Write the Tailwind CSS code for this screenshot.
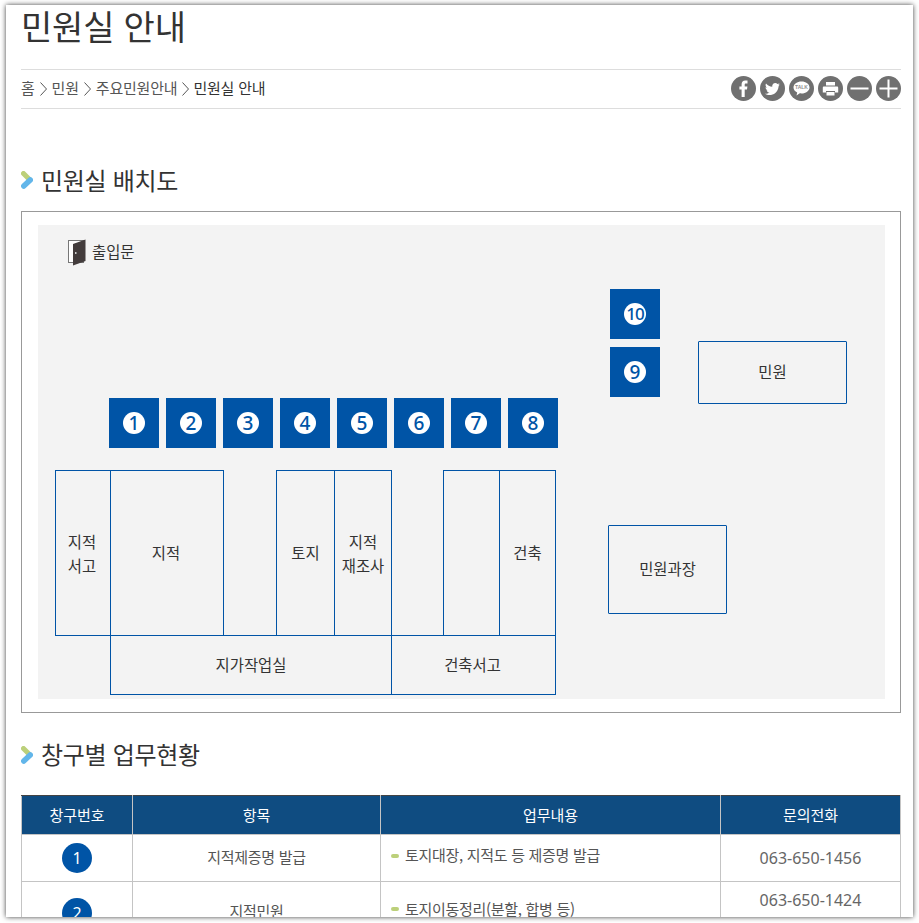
<!DOCTYPE html>
<html lang="ko">
<head>
  <meta charset="UTF-8">
  <meta name="viewport" content="width=device-width, initial-scale=1.0">
  <title>민원실 안내</title>
  <script src="https://cdn.jsdelivr.net/npm/@tailwindcss/browser@4"></script>
</head>
<body class="bg-white h-[923px] overflow-hidden font-['Noto_Sans_CJK_KR','Noto_Sans',sans-serif] text-[#333]">

  <div class="ml-[6px] mt-[5px] w-[907px] h-[912px] overflow-hidden bg-white pl-[15px] pr-[12px] shadow-[0_0_5px_rgba(0,0,0,0.75)]">

    <h1 class="h-[64px] -mt-[1px] mb-[1px] text-[34px] leading-[44px] font-normal tracking-[-0.2px]">민원실 안내</h1>

    <!-- breadcrumb -->
    <div class="h-[40px] flex items-center justify-between border-y border-[#ddd]">
      <div class="flex items-center gap-[5px] -mt-[1px] text-[15px] tracking-[-0.2px] text-[#555]">
        <span>홈</span>
        <svg width="7" height="14" viewBox="0 0 7 14" fill="none" stroke="#555"><path d="M0.5 0.5 L6.5 7 L0.5 13.5"/></svg>
        <span>민원</span>
        <svg width="7" height="14" viewBox="0 0 7 14" fill="none" stroke="#555"><path d="M0.5 0.5 L6.5 7 L0.5 13.5"/></svg>
        <span>주요민원안내</span>
        <svg width="7" height="14" viewBox="0 0 7 14" fill="none" stroke="#555"><path d="M0.5 0.5 L6.5 7 L0.5 13.5"/></svg>
        <span class="-ml-[1px] text-[#333]">민원실 안내</span>
      </div>
      <div class="flex gap-[4px] -mt-[2px]">
        <svg class="w-[25px] h-[25px]" viewBox="0 0 25 25"><circle cx="12.5" cy="12.5" r="12.5" fill="#707070"/><path d="M10.6 21v-7.6H8.4v-3h2.2V8.3c0-2.5 1.4-3.8 3.6-3.8h2.3v3h-1.5c-1 0-1.3.5-1.3 1.3v1.6h2.7l-.4 3h-2.3V21z" fill="#fff"/></svg>
        <svg class="w-[25px] h-[25px]" viewBox="0 0 25 25"><circle cx="12.5" cy="12.5" r="12.5" fill="#707070"/><path d="M20 8.4c-.6.3-1.2.4-1.8.5.6-.4 1.1-1 1.3-1.7-.6.4-1.3.6-2 .8-1.2-1.3-3.1-1.3-4.3-.2-.8.8-1.1 1.9-.9 2.9-2.5-.1-4.8-1.3-6.3-3.2-.8 1.4-.4 3.2.9 4.1-.5 0-1-.1-1.4-.4 0 1.5 1 2.8 2.5 3.1-.5.1-.9.1-1.4.1.4 1.2 1.6 2.1 2.9 2.1-1.3 1-3 1.5-4.6 1.3 4.4 2.8 12.8 1.2 13.7-7.3.1-.3.1-.5.1-.8.6-.5 1.2-1.1 1.6-1.7z" fill="#fff"/></svg>
        <svg class="w-[25px] h-[25px]" viewBox="0 0 25 25"><circle cx="12.5" cy="12.5" r="12.5" fill="#707070"/><path d="M12.5 5.5c-4.4 0-8 2.6-8 5.9 0 2.1 1.5 4 3.7 5l-.7 3.2 3.3-2.3c.5.1 1.1.1 1.7.1 4.4 0 8-2.7 8-6s-3.6-5.9-8-5.9z" fill="#fff"/><text x="12.5" y="13" text-anchor="middle" font-size="5" font-weight="700" fill="#909090" font-family="Liberation Sans, sans-serif">TALK</text></svg>
        <svg class="w-[25px] h-[25px]" viewBox="0 0 25 25"><circle cx="12.5" cy="12.5" r="12.5" fill="#707070"/><path d="M8 6h9v3.5H8zM6 10.5h13c.7 0 1.2.5 1.2 1.2V16.500H17V15H8v1.500H4.800v-4.800c0-.7.5-1.200 1.200-1.200zM8.500 16h8v3.500h-8z" fill="#fff"/></svg>
        <svg class="w-[25px] h-[25px]" viewBox="0 0 25 25"><circle cx="12.5" cy="12.5" r="12.5" fill="#707070"/><rect x="3.500" y="11.500" width="18" height="2" fill="#fff"/></svg>
        <svg class="w-[25px] h-[25px]" viewBox="0 0 25 25"><circle cx="12.5" cy="12.5" r="12.5" fill="#707070"/><path d="M3.500 11.500h8v-8h2v8h8v2h-8v8h-2v-8h-8z" fill="#fff"/></svg>
      </div>
    </div>

    <!-- 민원실 배치도 -->
    <h2 class="mt-[52px] h-[38px] flex items-center gap-[8px] text-[24px] font-normal tracking-[-0.3px]">
      <svg width="12" height="18" viewBox="0 0 12 18"><path d="M2.500 2.500 L8.500 8.500" stroke="#bcd07a" stroke-width="5" stroke-linecap="round"/><path d="M9.200 9 L2.800 15" stroke="#62b6ea" stroke-width="5.500" stroke-linecap="round"/></svg>
      <span class="-mt-[1px]">민원실 배치도</span>
    </h2>

    <div class="mt-[12px] h-[502px] border border-[#999] pl-[16px] pr-[15px] py-[13px]">
      <div class="relative w-[847px] h-[474px] bg-[#f3f3f3] text-[15.4px] text-[#333]">

        <!-- door -->
        <div class="absolute left-[30px] top-[14px] flex items-center gap-[6px]">
          <svg width="18" height="27" viewBox="0 0 18 27"><rect x="0.500" y="1.500" width="15" height="22" fill="#fff" stroke="#777"/><path d="M5 5 L17.500 0.500 V22 L5 26.500z" fill="#433c3c"/><rect x="7" y="13" width="1.500" height="2" fill="#ccc"/></svg>
          <span class="-mt-[4px] leading-[24px]">출입문</span>
        </div>

        <!-- window numbers -->
        <div class="absolute left-[71px] top-[173px] w-[50px] h-[50px] bg-[#0054a6] flex items-center justify-center"><span class="w-[22px] h-[22px] rounded-full bg-white text-[#0054a6] text-[19px] leading-[22px] text-center font-medium font-['Noto_Sans']">1</span></div>
        <div class="absolute left-[128px] top-[173px] w-[50px] h-[50px] bg-[#0054a6] flex items-center justify-center"><span class="w-[22px] h-[22px] rounded-full bg-white text-[#0054a6] text-[19px] leading-[22px] text-center font-medium font-['Noto_Sans']">2</span></div>
        <div class="absolute left-[185px] top-[173px] w-[50px] h-[50px] bg-[#0054a6] flex items-center justify-center"><span class="w-[22px] h-[22px] rounded-full bg-white text-[#0054a6] text-[19px] leading-[22px] text-center font-medium font-['Noto_Sans']">3</span></div>
        <div class="absolute left-[242px] top-[173px] w-[50px] h-[50px] bg-[#0054a6] flex items-center justify-center"><span class="w-[22px] h-[22px] rounded-full bg-white text-[#0054a6] text-[19px] leading-[22px] text-center font-medium font-['Noto_Sans']">4</span></div>
        <div class="absolute left-[299px] top-[173px] w-[50px] h-[50px] bg-[#0054a6] flex items-center justify-center"><span class="w-[22px] h-[22px] rounded-full bg-white text-[#0054a6] text-[19px] leading-[22px] text-center font-medium font-['Noto_Sans']">5</span></div>
        <div class="absolute left-[356px] top-[173px] w-[50px] h-[50px] bg-[#0054a6] flex items-center justify-center"><span class="w-[22px] h-[22px] rounded-full bg-white text-[#0054a6] text-[19px] leading-[22px] text-center font-medium font-['Noto_Sans']">6</span></div>
        <div class="absolute left-[413px] top-[173px] w-[50px] h-[50px] bg-[#0054a6] flex items-center justify-center"><span class="w-[22px] h-[22px] rounded-full bg-white text-[#0054a6] text-[19px] leading-[22px] text-center font-medium font-['Noto_Sans']">7</span></div>
        <div class="absolute left-[470px] top-[173px] w-[50px] h-[50px] bg-[#0054a6] flex items-center justify-center"><span class="w-[22px] h-[22px] rounded-full bg-white text-[#0054a6] text-[19px] leading-[22px] text-center font-medium font-['Noto_Sans']">8</span></div>
        <div class="absolute left-[572px] top-[64px] w-[50px] h-[50px] bg-[#0054a6] flex items-center justify-center"><span class="w-[22px] h-[22px] rounded-full bg-white text-[#0054a6] text-[17px] leading-[22px] text-center font-medium tracking-[-1px] font-['Noto_Sans']">10</span></div>
        <div class="absolute left-[572px] top-[122px] w-[50px] h-[50px] bg-[#0054a6] flex items-center justify-center"><span class="w-[22px] h-[22px] rounded-full bg-white text-[#0054a6] text-[19px] leading-[22px] text-center font-medium font-['Noto_Sans']">9</span></div>

        <!-- rooms -->
        <div class="absolute left-[17px] top-[245px] w-[56px] h-[166px] border border-[#0054a6] flex items-center justify-center text-center leading-[24px] pr-[2px]">지적<br>서고</div>
        <div class="absolute left-[72px] top-[245px] w-[114px] h-[166px] border border-[#0054a6] flex items-center justify-center pr-[2px]">지적</div>
        <div class="absolute left-[238px] top-[245px] w-[59px] h-[166px] border border-[#0054a6] flex items-center justify-center">토지</div>
        <div class="absolute left-[296px] top-[245px] w-[58px] h-[166px] border border-[#0054a6] flex items-center justify-center text-center leading-[24px]">지적<br>재조사</div>
        <div class="absolute left-[405px] top-[245px] w-[57px] h-[166px] border border-[#0054a6]"></div>
        <div class="absolute left-[461px] top-[245px] w-[57px] h-[166px] border border-[#0054a6] flex items-center justify-center">건축</div>
        <div class="absolute left-[72px] top-[410px] w-[282px] h-[60px] border border-[#0054a6] flex items-center justify-center">지가작업실</div>
        <div class="absolute left-[353px] top-[410px] w-[165px] h-[60px] border border-[#0054a6] flex items-center justify-center pr-[2px]">건축서고</div>
        <div class="absolute left-[570px] top-[300px] w-[119px] h-[89px] border border-[#0054a6] rounded-[1px] flex items-center justify-center pb-[2px]">민원과장</div>
        <div class="absolute left-[660px] top-[116px] w-[149px] h-[63px] border border-[#0054a6] rounded-[1px] flex items-center justify-center pb-[2px]">민원</div>
      </div>
    </div>

    <!-- 창구별 업무현황 -->
    <h2 class="mt-[22px] h-[40px] flex items-center gap-[8px] text-[24px] font-normal tracking-[-0.3px]">
      <svg width="12" height="18" viewBox="0 0 12 18"><path d="M2.500 2.500 L8.500 8.500" stroke="#bcd07a" stroke-width="5" stroke-linecap="round"/><path d="M9.200 9 L2.800 15" stroke="#62b6ea" stroke-width="5.500" stroke-linecap="round"/></svg>
      <span class="-mt-[3px]">창구별 업무현황</span>
    </h2>

    <table class="mt-[20px] w-[880px] table-fixed border-collapse text-[15px] tracking-[-0.3px] text-[#555]">
      <thead>
        <tr class="h-[39px] bg-[#0f4c81] text-white">
          <th class="w-[111px] border border-[#c4c4c4] border-t-[#444] font-normal tracking-normal">창구번호</th>
          <th class="w-[248px] border border-[#c4c4c4] border-t-[#444] font-normal tracking-normal">항목</th>
          <th class="w-[340px] border border-[#c4c4c4] border-t-[#444] font-normal tracking-normal">업무내용</th>
          <th class="border border-[#c4c4c4] border-t-[#444] font-normal tracking-normal">문의전화</th>
        </tr>
      </thead>
      <tbody>
        <tr class="h-[47px]">
          <td class="border border-[#c4c4c4]"><span class="mx-auto block w-[30px] h-[30px] rounded-full bg-[#0054a6] text-white text-center text-[16px] leading-[30px] font-['Noto_Sans']">1</span></td>
          <td class="border border-[#c4c4c4] text-center"><span class="block -mt-[2px]">지적제증명 발급</span></td>
          <td class="border border-[#c4c4c4] pl-[10px]">
            <div class="flex items-center gap-[6px] -mt-[5px]"><span class="w-[8px] h-[4px] rounded-full bg-[#bcd07a]"></span>토지대장, 지적도 등 제증명 발급</div>
          </td>
          <td class="border border-[#c4c4c4] text-center text-[16px] tracking-normal text-[#666] font-['Noto_Sans']">063-650-1456</td>
        </tr>
        <tr class="h-[60px]">
          <td class="border border-[#c4c4c4] align-top pt-[16px]"><span class="mx-auto block w-[30px] h-[30px] rounded-full bg-[#0054a6] text-white text-center text-[16px] leading-[30px] font-['Noto_Sans']">2</span></td>
          <td class="border border-[#c4c4c4] text-center align-top pt-[18px]">지적민원</td>
          <td class="border border-[#c4c4c4] pl-[10px] align-top pt-[16px]">
            <div class="flex items-center gap-[6px]"><span class="w-[8px] h-[4px] rounded-full bg-[#bcd07a]"></span>토지이동정리(분할, 합병 등)</div>
          </td>
          <td class="border border-[#c4c4c4] text-center text-[16px] tracking-normal text-[#666] align-top pt-[6px] font-['Noto_Sans']">063-650-1424</td>
        </tr>
      </tbody>
    </table>
  </div>

</body>
</html>
